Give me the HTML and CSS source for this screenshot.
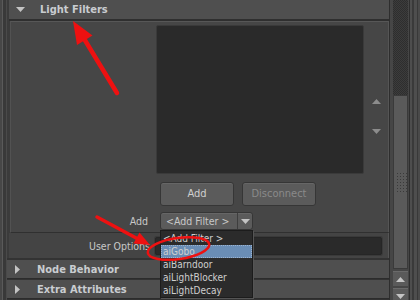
FILE: index.html
```html
<!DOCTYPE html>
<html lang="en">
<head>
    <meta charset="UTF-8">
    <title>Attribute Editor - Light Filters</title>
    <link rel="stylesheet" href="styles.css">
</head>
<body>
    <div class="editor">
        <div class="main">
            <div class="gutter"></div>
            <div class="sections">
                <div class="arnold">
                    <div class="frame-head open">
                        <svg class="tri" width="9" height="5" viewBox="0 0 9 5"><polygon points="0,0 9,0 4.5,5" fill="#c4c4c4"/></svg>
                        <span>Light Filters</span>
                    </div>
                    <div class="frame-body">
                        <div class="list-row">
                            <div class="list-box"></div>
                            <div class="list-arrows">
                                <svg class="up" width="9" height="5" viewBox="0 0 9 5"><polygon points="0,5 9,5 4.5,0" fill="#8c8c8c"/></svg>
                                <svg class="down" width="9" height="5" viewBox="0 0 9 5"><polygon points="0,0 9,0 4.5,5" fill="#8c8c8c"/></svg>
                            </div>
                        </div>
                        <div class="btn-row">
                            <div class="btn">Add</div>
                            <div class="btn disabled">Disconnect</div>
                        </div>
                        <div class="add-row">
                            <div class="label">Add</div>
                            <div class="select">
                                <span class="select-text">&lt;Add Filter &gt;</span>
                                <span class="select-arrow">
                                    <svg width="9" height="5" viewBox="0 0 9 5"><polygon points="0,0 9,0 4.5,5" fill="#c4c4c4"/></svg>
                                </span>
                            </div>
                        </div>
                    </div>
                    <div class="opt-row">
                        <div class="label">User Options</div>
                        <div class="field"></div>
                    </div>
                </div>
                <div class="frame-head closed">
                    <svg class="tri" width="5" height="9" viewBox="0 0 5 9"><polygon points="0,0 5,4.5 0,9" fill="#c4c4c4"/></svg>
                    <span>Node Behavior</span>
                </div>
                <div class="frame-head closed last">
                    <svg class="tri" width="5" height="9" viewBox="0 0 5 9"><polygon points="0,0 5,4.5 0,9" fill="#c4c4c4"/></svg>
                    <span>Extra Attributes</span>
                </div>
            </div>
        </div>
        <div class="scrollbar">
            <div class="track"></div>
            <div class="thumb"><div class="grip"></div></div>
            <div class="sb-btn">
                <svg width="9" height="5" viewBox="0 0 9 5"><polygon points="0,5 9,5 4.5,0" fill="#c4c4c4"/></svg>
            </div>
            <div class="sb-btn">
                <svg width="9" height="5" viewBox="0 0 9 5"><polygon points="0,0 9,0 4.5,5" fill="#c4c4c4"/></svg>
            </div>
        </div>
        <div class="edge"></div>
    </div>

    <!-- open dropdown of the Add select -->
    <ul class="popup">
        <li>&lt;Add Filter &gt;</li>
        <li class="active">aiGobo</li>
        <li>aiBarndoor</li>
        <li>aiLightBlocker</li>
        <li>aiLightDecay</li>
    </ul>

    <!-- red annotations drawn over the screenshot -->
    <svg class="marks" width="420" height="300" viewBox="0 0 420 300">
        <line x1="117" y1="93" x2="83" y2="37" stroke="#ee1111" stroke-width="4.5" stroke-linecap="round"/>
        <polygon points="73,21 92.5,35.5 77,45" fill="#ee1111"/>
        <line x1="97" y1="217" x2="138" y2="239" stroke="#ee1111" stroke-width="3.5" stroke-linecap="round"/>
        <polygon points="150,245 133.5,243.5 139.5,232.5" fill="#ee1111"/>
        <ellipse cx="178.5" cy="248.5" rx="31" ry="10.5" transform="rotate(-8 178.5 248.5)" fill="none" stroke="#ee1111" stroke-width="2.5"/>
    </svg>
</body>
</html>
```

FILE: styles.css
```css
/* Maya style attribute editor */
body {
    margin: 0;
    width: 420px;
    height: 300px;
    overflow: hidden;
    position: relative;
    background-color: #3c3c3c;
    font-family: "DejaVu Sans Condensed", "DejaVu Sans", sans-serif;
    font-stretch: condensed;
    font-size: 10.5px;
    color: #c8c8c8;
}

.editor {
    display: flex;
    height: 300px;
}

.main {
    width: 390px;
    display: flex;
}

.gutter {
    width: 7px;
    flex: none;
    background: linear-gradient(to right, #474747 0 2px, #5a5a5a 2px 3px, #393939 3px 6px, #4a4a4a 6px 7px);
}

.sections {
    flex: 1;
    display: flex;
    flex-direction: column;
    background-color: #333333;
}

.arnold {
    padding-left: 2px;
    background-color: #3b3b3b;
}

/* Section headers */
.frame-head {
    display: flex;
    align-items: center;
    font-weight: bold;
    font-size: 11px;
    color: #c9ccd0;
    background-color: #4f4f4f;
}

.frame-head.open {
    height: 19px;
    padding-left: 7px;
    border-bottom: 2px solid #2f2f2f;
}

.frame-head.open .tri {
    margin-right: 15px;
}

.frame-head.closed {
    height: 18px;
    padding-left: 8px;
    margin-top: 2px;
    border-bottom: 1px solid #2c2c2c;
}

.frame-head.closed .tri {
    margin-right: 17px;
}

.frame-head.last {
    margin-top: 1px;
}

/* Light Filters body */
.frame-body {
    margin-left: 1px;
    padding: 3px 0 2px 0;
    background-color: #464646;
    border-top: 1px solid #575757;
    border-left: 1px solid #525252;
    border-right: 2px solid #555555;
    border-bottom: 1px solid #303030;
}

.list-row {
    display: flex;
    padding-left: 145px;
}

.list-box {
    width: 206px;
    height: 147px;
    background-color: #2a2a2a;
    border: 1px solid #3a3a3a;
    border-radius: 2px;
}

.list-arrows {
    flex: 1;
    display: flex;
    flex-direction: column;
    align-items: center;
}

.list-arrows .up {
    margin-top: 74px;
}

.list-arrows .down {
    margin-top: 25px;
}

.btn-row {
    display: flex;
    gap: 8px;
    margin-top: 8px;
    padding-left: 149px;
}

.btn {
    width: 72px;
    height: 22px;
    line-height: 22px;
    text-align: center;
    background-color: #5b5b5b;
    border: 1px solid #363636;
    border-radius: 3px;
    box-shadow: inset 0 1px 0 #666666;
    font-size: 11px;
    color: #cfcfcf;
}

.btn.disabled {
    color: #8a8a8a;
}

.add-row {
    display: flex;
    align-items: center;
    margin-top: 6px;
}

.label {
    text-align: right;
    color: #c8c8c8;
}

.add-row .label {
    width: 137px;
    margin-right: 12px;
}

.select {
    width: 91px;
    height: 16px;
    display: flex;
    background-color: #5b5b5b;
    border: 1px solid #363636;
    border-radius: 3px;
    box-shadow: inset 0 1px 0 #666666;
}

.select-text {
    flex: 1;
    padding-left: 5px;
    line-height: 16px;
    font-size: 10.5px;
}

.select-arrow {
    width: 14px;
    display: flex;
    align-items: center;
    justify-content: center;
    border-left: 1px solid #3e3e3e;
}

/* User options row */
.opt-row {
    display: flex;
    align-items: center;
    height: 25px;
    padding-right: 6px;
    background-color: #444444;
    border-right: 2px solid #555555;
    box-sizing: border-box;
}

.opt-row .label {
    width: 141px;
    margin-right: 5px;
}

.field {
    flex: 1;
    height: 16px;
    background-color: #2a2a2a;
    border: 1px solid #262626;
    border-radius: 2px;
    box-shadow: 0 0 0 1px #3a3a3a;
}

/* Scrollbar */
.scrollbar {
    width: 15px;
    padding: 0 1px 0 3px;
    display: flex;
    flex-direction: column;
    background-color: #464646;
    border-left: 1px solid #2e2e2e;
    margin-left: -1px;
}

.track {
    height: 95px;
    flex: none;
    background-color: #353535;
    background-image: repeating-conic-gradient(#2e2e2e 0 25%, #3c3c3c 0 50%);
    background-size: 2px 2px;
}

.thumb {
    height: 172px;
    flex: none;
    position: relative;
    background-color: #5a5a5a;
    border: 1px solid #3a3a3a;
}

.grip {
    position: absolute;
    left: 2px;
    top: 76px;
    width: 11px;
    height: 20px;
    background-image: radial-gradient(#3a3a3a 0.8px, transparent 1px);
    background-size: 3px 3px;
}

.sb-btn {
    height: 15px;
    flex: none;
    margin-top: 2px;
    display: flex;
    align-items: center;
    justify-content: center;
    background-color: #5a5a5a;
    border-top: 1px solid #6a6a6a;
    box-sizing: border-box;
}

.edge {
    flex: 1;
    background: linear-gradient(to right, #2e2e2e 0 1px, #4e4e4e 1px 3px, #3a3a3a 3px 5px, #4e4e4e 5px 8px, #393939 8px 9px, #4a4a4a 9px 11px);
}

/* Dropdown list */
.popup {
    position: absolute;
    left: 160px;
    top: 230px;
    width: 91px;
    height: 65px;
    margin: 0;
    padding: 1px 0 0 0;
    list-style-type: none;
    background-color: #2b2b2b;
    border: 1px solid #1c1c1c;
    box-shadow: 1px 1px 0 #555555;
}

.popup li {
    height: 13px;
    line-height: 13px;
    padding-left: 2px;
    font-size: 10px;
    color: #cfcfcf;
}

.popup li.active {
    background-color: #6a8db5;
    outline: 1px dotted #9cb3cf;
    outline-offset: -1px;
}

/* Annotations */
.marks {
    position: absolute;
    left: 0;
    top: 0;
}
```
